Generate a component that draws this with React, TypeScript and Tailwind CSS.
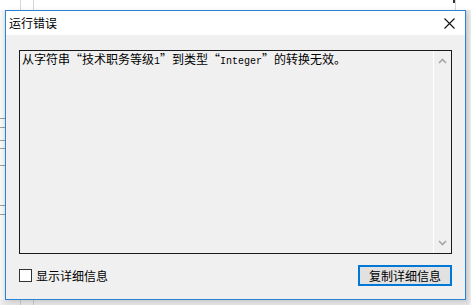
import React from "react";

const cjk = { fontFamily: '"Noto Sans CJK SC", "Noto Sans", sans-serif' };
const mono = { fontFamily: '"Liberation Mono", "DejaVu Sans Mono", monospace', fontSize: 10 };

function OpenQ() {
  return <span className="inline-block w-[12px] text-right">“</span>;
}
function CloseQ() {
  return <span className="inline-block w-[12px] text-left">”</span>;
}

function Background() {
  return (
    <div className="absolute inset-0">
      <div className="absolute left-[20px] top-0 h-[10px] w-px bg-[#d6d6d6]" />
      <div className="absolute left-[33px] top-0 h-[10px] w-px bg-[#d6d6d6]" />
      <div className="absolute left-[455px] top-0 h-[10px] w-px bg-[#d6d6d6]" />
      <div className="absolute left-[453px] top-0 h-[3px] w-[2px] bg-[#333]" />
      <div className="absolute left-0 top-[300px] h-[5px] w-full bg-[#e9e9e9]" />
      <div className="absolute left-[20px] top-[300px] h-[5px] w-px bg-[#c8c8c8]" />
      <div className="absolute left-[33px] top-[300px] h-[5px] w-px bg-[#c8c8c8]" />
      {[118, 127, 140, 148, 165, 205, 214].map((y) => (
        <div key={y} className="absolute left-0 h-px w-[5px] bg-[#222]" style={{ top: y }} />
      ))}
      <div className="absolute left-0 top-[10px] h-[295px] w-[5px] bg-gradient-to-r from-[#f4f4f4] to-[#e2e2e2] opacity-60" />
      <div className="absolute right-0 top-[10px] h-[295px] w-[5px] bg-gradient-to-l from-[#f2f2f2] to-[#e0e0e0]" />
    </div>
  );
}

export default function App() {
  return (
    <div className="relative w-[471px] h-[305px] overflow-hidden bg-white" style={cjk}>
      <Background />
      <div className="relative ml-[5px] pt-[10px]">
        <div className="flex h-[290px] w-[461px] flex-col border border-[#2a83d6] bg-[#f0f0f0] shadow-[2px_2px_6px_rgba(0,0,0,0.15)]">
          <div className="flex h-[24px] items-center justify-between bg-white">
            <span className="pl-[3px] text-[12px] leading-none text-black">运行错误</span>
            <svg width="11" height="11" viewBox="0 0 11 11" className="mr-[10px]">
              <path d="M0.5 0.5 L10.5 10.5 M10.5 0.5 L0.5 10.5" stroke="#111" strokeWidth="1.1" fill="none" />
            </svg>
          </div>
          <div className="flex flex-1 flex-col px-[13px] pt-[15px]">
            <div className="flex h-[204px] w-[433px] border border-[#1a1a1a] bg-[#f0f0f0]">
              <div className="flex-1 pl-[2px] pt-[1px] text-[12px] leading-[14px] text-black whitespace-nowrap">
                从字符串<OpenQ />技术职务等级<span style={mono}>1</span><CloseQ />到类型<OpenQ /><span style={mono}>Integer</span><CloseQ />的转换无效。
              </div>
              <div className="flex w-[18px] flex-col items-center justify-between border-l border-white py-[7px]">
                <svg width="9" height="6" viewBox="0 0 9 6">
                  <path d="M1 5 L4.5 1.5 L8 5" stroke="#a6a6a6" strokeWidth="1.6" fill="none" />
                </svg>
                <svg width="9" height="6" viewBox="0 0 9 6">
                  <path d="M1 1 L4.5 4.5 L8 1" stroke="#a6a6a6" strokeWidth="1.6" fill="none" />
                </svg>
              </div>
            </div>
            <div className="mt-[11px] flex items-center justify-between">
              <label className="flex items-center">
                <span className="block h-[13px] w-[13px] border border-[#333] bg-white" />
                <span className="ml-[4px] text-[12px] leading-none text-black">显示详细信息</span>
              </label>
              <button className="flex h-[21px] w-[94px] items-center justify-center border-2 border-[#0078d7] bg-[#e1e1e1] text-[12px] leading-none text-black">
                复制详细信息
              </button>
            </div>
          </div>
        </div>
      </div>
    </div>
  );
}
